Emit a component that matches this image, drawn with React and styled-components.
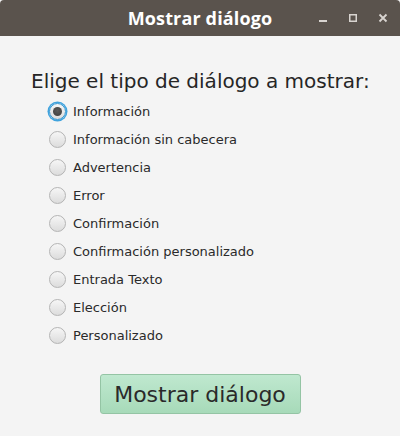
import React, { useState } from "react";
import styled, { createGlobalStyle } from "styled-components";

const GlobalStyle = createGlobalStyle`
  html, body {
    margin: 0;
    padding: 0;
    background: #f4f4f4;
  }
  * { box-sizing: border-box; }
`;

const Window = styled.div`
  width: 400px;
  height: 436px;
  display: flex;
  flex-direction: column;
  background: #f4f4f4;
  font-family: "DejaVu Sans", sans-serif;
`;

const TitleBar = styled.div`
  height: 36px;
  background: #5a534d;
  border-radius: 4px 4px 0 0;
  position: relative;
  display: flex;
  align-items: center;
  justify-content: center;
`;

const Title = styled.span`
  color: #ffffff;
  font-family: "Open Sans", "DejaVu Sans", sans-serif;
  font-weight: 700;
  font-size: 18px;
  letter-spacing: 0.15px;
`;

const Controls = styled.div`
  position: absolute;
  right: 12px;
  top: 0;
  height: 36px;
  display: flex;
  align-items: center;
  gap: 20px;
`;

const Content = styled.div`
  display: flex;
  flex-direction: column;
  padding: 0 0 0 31px;
`;

const Heading = styled.div`
  margin-top: 31px;
  font-size: 20px;
  color: #262626;
  line-height: 28px;
`;

const List = styled.div`
  display: flex;
  flex-direction: column;
  padding-left: 18px;
  margin-top: 2px;
`;

const Option = styled.label`
  height: 28px;
  display: flex;
  align-items: center;
  gap: 7px;
  font-size: 13px;
  color: #2a2a2a;
  cursor: pointer;
`;

const Radio = styled.span`
  width: 17px;
  height: 17px;
  border-radius: 50%;
  border: 1px solid ${({ checked }) => (checked ? "#2f95d3" : "#b4b4b4")};
  background: linear-gradient(#f6f6f6, #dcdcdc);
  box-shadow: ${({ checked }) => (checked ? "0 0 0 1.5px #3fa3de" : "none")};
  display: flex;
  align-items: center;
  justify-content: center;
  &::after {
    content: "";
    width: 9px;
    height: 9px;
    border-radius: 50%;
    background: radial-gradient(circle at 50% 40%, #5a5a5a, #3c3c3c);
    display: ${({ checked }) => (checked ? "block" : "none")};
  }
`;

const Footer = styled.div`
  display: flex;
  justify-content: center;
  margin-top: 25px;
`;

const Button = styled.button`
  width: 201px;
  height: 40px;
  border: 1px solid #94c4a4;
  border-radius: 3px;
  background: linear-gradient(#bfe8cf, #a7dab9);
  color: #2a2a2a;
  font-family: "DejaVu Sans", sans-serif;
  font-size: 22px;
  padding: 0;
  cursor: pointer;
`;

const options = [
  "Información",
  "Información sin cabecera",
  "Advertencia",
  "Error",
  "Confirmación",
  "Confirmación personalizado",
  "Entrada Texto",
  "Elección",
  "Personalizado",
];

export default function App() {
  const [selected, setSelected] = useState(0);
  return (
    <>
      <GlobalStyle />
      <Window>
        <TitleBar>
          <Title>Mostrar diálogo</Title>
          <Controls>
            <svg width="10" height="10" viewBox="0 0 10 10">
              <rect x="1" y="7" width="8" height="2" fill="#d8d4d0" />
            </svg>
            <svg width="10" height="10" viewBox="0 0 10 10">
              <rect x="1.75" y="1.75" width="6.5" height="6.5" fill="none" stroke="#d8d4d0" strokeWidth="1.5" />
            </svg>
            <svg width="10" height="10" viewBox="0 0 10 10">
              <path d="M1.5 1.5 L8.5 8.5 M8.5 1.5 L1.5 8.5" stroke="#d8d4d0" strokeWidth="1.8" />
            </svg>
          </Controls>
        </TitleBar>
        <Content>
          <Heading>Elige el tipo de diálogo a mostrar:</Heading>
          <List>
            {options.map((o, i) => (
              <Option key={o} onClick={() => setSelected(i)}>
                <Radio checked={selected === i} />
                {o}
              </Option>
            ))}
          </List>
        </Content>
        <Footer>
          <Button>Mostrar diálogo</Button>
        </Footer>
      </Window>
    </>
  );
}
